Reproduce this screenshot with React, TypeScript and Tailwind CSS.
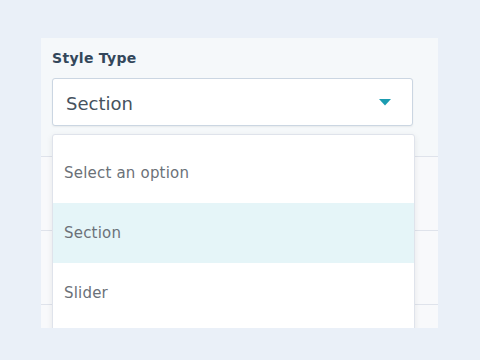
export default function App() {
  const options = ['Select an option', 'Section', 'Slider']

  return (
    <div className="w-[480px] h-[360px] bg-[#eaf0f8] pt-[38px] pl-[41px] font-['DejaVu_Sans','Noto_Sans',sans-serif]">
      <div className="relative w-[397px] h-[290px] bg-[#f5f8fa] overflow-hidden">
        <div className="px-[11px] pt-[11px]">
          <label className="block text-[14px] font-bold tracking-[0.3px] text-[#33475b] leading-[18px]">Style Type</label>
          <div className="mt-[11px] w-[361px] h-[48px] flex items-center justify-between px-[13px] bg-white border border-[#cbd6e2] rounded-[3px] shadow-[0_1px_2px_rgba(0,0,0,0.06)]">
            <span className="text-[18px] text-[#46525e] pt-[2px]">Section</span>
            <svg width="12" height="7" viewBox="0 0 12 7" className="mr-[8px]">
              <path d="M0 0h12L6 6.5z" fill="#1b9cb0" />
            </svg>
          </div>
        </div>

        {/* rows behind the open menu */}
        <div className="mt-[30px]">
          <div className="h-[74px] border-t border-[#dfe3eb] bg-[#f8f9fb]" />
          <div className="h-[74px] border-t border-[#dfe3eb] bg-[#f8f9fb]" />
          <div className="h-[74px] border-t border-[#dfe3eb] bg-[#f8f9fb]" />
        </div>

        <div className="absolute left-[11px] top-[96px] w-[363px] h-[210px] bg-white border border-[#dfe3eb] rounded-[3px] shadow-[0_2px_6px_rgba(0,0,0,0.08)] pt-[8px]">
          {options.map((o, i) => (
            <div
              key={o}
              className={`h-[60px] flex items-center px-[11px] text-[15px] tracking-[0.2px] text-[#6b7178] ${i === 1 ? 'bg-[#e5f5f8]' : ''}`}
            >
              {o}
            </div>
          ))}
        </div>
      </div>
    </div>
  )
}
